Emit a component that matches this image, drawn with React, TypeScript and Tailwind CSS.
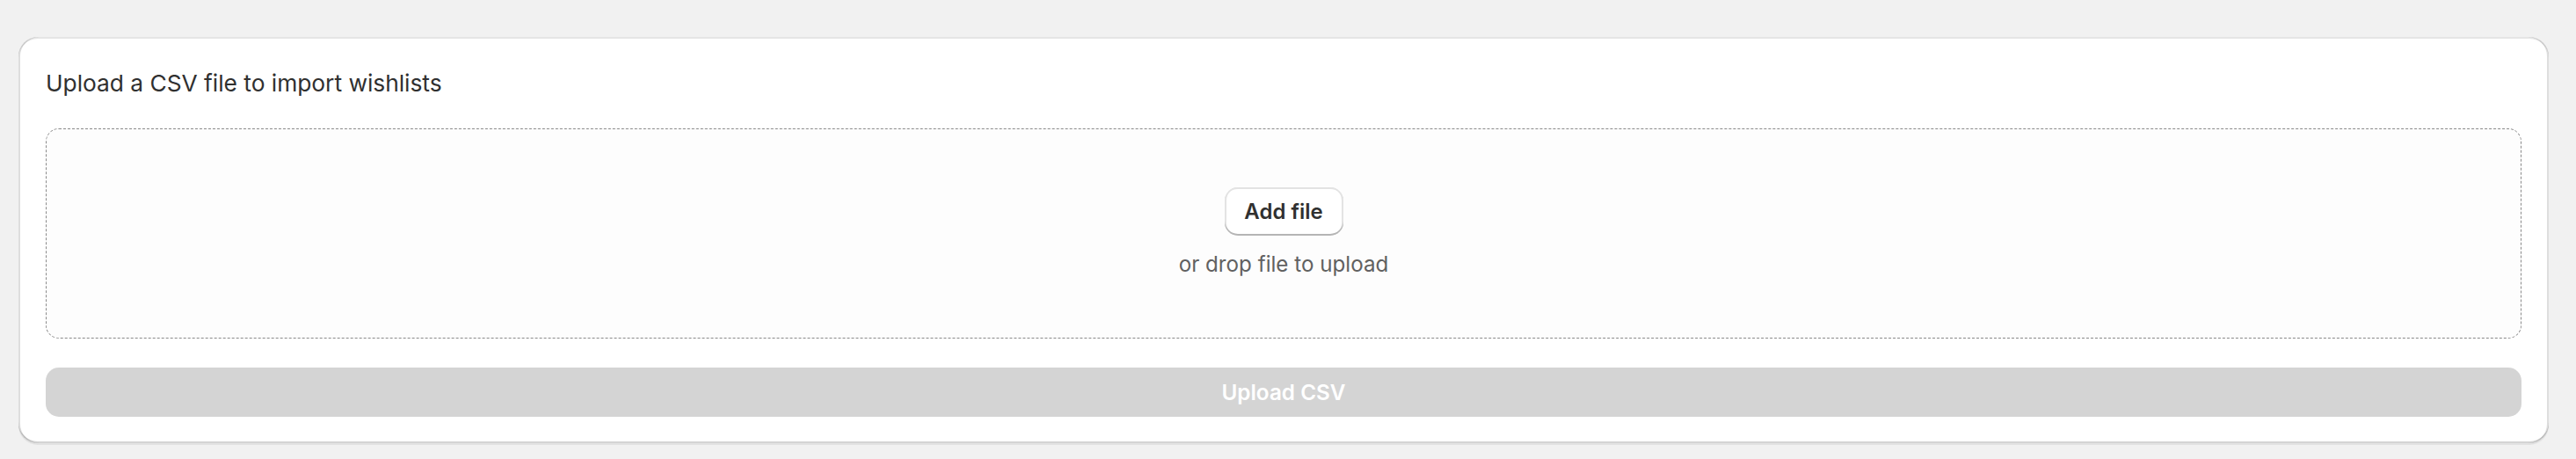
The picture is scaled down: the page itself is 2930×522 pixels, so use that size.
export default function App() {
  return (
    <div className="min-h-[522px] bg-[#f1f1f1] pl-[21px] pr-[31px] pt-[42px] pb-[18px]" style={{ fontFamily: "Inter, 'Noto Sans', sans-serif" }}>
      <div className="flex flex-col rounded-[22px] bg-white px-[31px] pt-[34px] pb-[30px] shadow-[inset_2px_0_0_rgba(0,0,0,0.13),inset_-2px_0_0_rgba(0,0,0,0.13),inset_0_-2px_0_rgba(0,0,0,0.17),inset_0_2px_0_rgba(204,204,204,0.5),0_2px_0_rgba(26,26,26,0.07)]">
        <h2 className="text-[26.3px] leading-[38px] font-normal text-[#303030]">Upload a CSV file to import wishlists</h2>
        <div className="mt-[32px] flex h-[239px] flex-col items-center justify-center rounded-[15px] border border-dashed border-[#8a8a8a] bg-[#fdfdfd]">
          <button className="mt-[2px] h-[55px] w-[135px] rounded-[15px] bg-white text-[24px] font-semibold text-[#303030] shadow-[inset_0_-2px_0_#b5b5b5,inset_2px_0_0_#e3e3e3,inset_-2px_0_0_#e3e3e3,inset_0_2px_0_#e3e3e3]">
            Add file
          </button>
          <p className="mt-[14px] text-[24.2px] leading-[38px] text-[#616161]">or drop file to upload</p>
        </div>
        <button disabled className="mt-[33px] h-[56px] w-full rounded-[15px] bg-[#d4d4d4] text-[24.3px] font-semibold text-white">
          Upload CSV
        </button>
      </div>
    </div>
  );
}
